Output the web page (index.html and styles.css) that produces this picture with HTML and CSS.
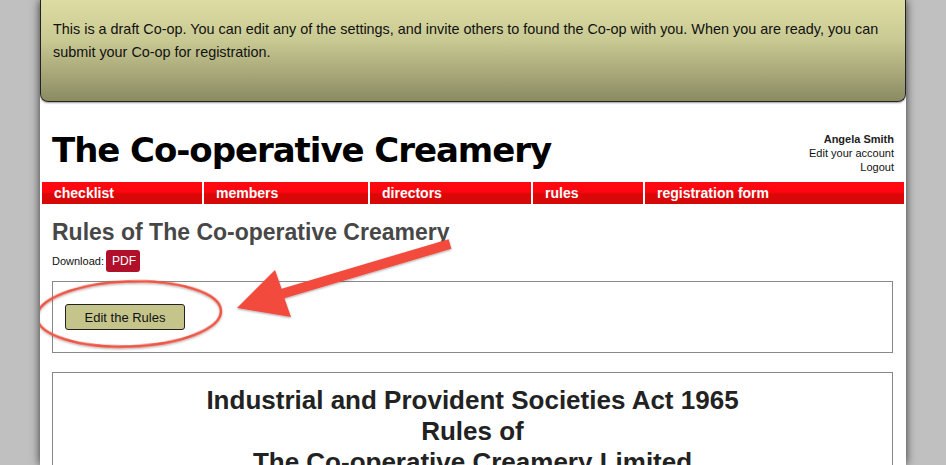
FILE: index.html
```html
<!DOCTYPE html>
<html lang="en">
<head>
<meta charset="utf-8">
<title>Rules of The Co-operative Creamery</title>
<link rel="stylesheet" href="styles.css">
</head>
<body>
<div class="page">
  <div class="banner">
    <p>This is a draft Co-op. You can edit any of the settings, and invite others to found the Co-op with you. When you are ready, you can submit your Co-op for registration.</p>
  </div>
  <div class="header">
    <h1 class="title">The Co-operative Creamery</h1>
    <div class="user">
      <strong>Angela Smith</strong>
      <a href="#">Edit your account</a>
      <a href="#">Logout</a>
    </div>
  </div>
  <nav class="nav">
    <a href="#">checklist</a>
    <a href="#">members</a>
    <a href="#">directors</a>
    <a href="#">rules</a>
    <a href="#">registration form</a>
  </nav>
  <div class="content">
    <h2 class="heading">Rules of The Co-operative Creamery</h2>
    <div class="download">Download: <a class="pdf" href="#">PDF</a></div>
    <div class="box edit-box">
      <button class="edit-btn">Edit the Rules</button>
    </div>
    <div class="box rules-doc">
      <p>Industrial and Provident Societies Act 1965</p>
      <p>Rules of</p>
      <p>The Co-operative Creamery Limited</p>
    </div>
  </div>
  <svg class="annot" width="946" height="465" viewBox="0 0 946 465">
    <defs>
      <filter id="sh" x="-20%" y="-20%" width="140%" height="140%">
        <feDropShadow dx="0" dy="1" stdDeviation="1.2" flood-color="#000" flood-opacity="0.35"/>
      </filter>
    </defs>
    <ellipse cx="129" cy="314" rx="92" ry="32.5" fill="none" stroke="#ee5443" stroke-width="2.5" transform="rotate(-2 129 314)" filter="url(#sh)"/>
    <polygon points="237,308 275,270 281.6,288.7 448.6,239.2 451.4,248.8 284.4,298.3 291,317" fill="#f24c3d" filter="url(#sh)"/>
  </svg>
</div>
</body>
</html>
```
FILE: styles.css
```css
* { box-sizing: border-box; }
html, body { margin: 0; padding: 0; }
body {
  background: #c0c0c0;
  font-family: "Liberation Sans", Arial, sans-serif;
  color: #111;
  height: 465px;
  overflow: hidden;
}
.page {
  position: relative;
  width: 866px;
  margin-left: 40px;
  height: 465px;
  overflow: hidden;
  background: #fff;
  box-shadow: 0 0 9px rgba(0,0,0,0.75);
}
.banner {
  height: 102px;
  background: linear-gradient(#dcdca2 0%, #c9c993 40%, #8b8b63 100%);
  border: 1px solid #222;
  border-top: none;
  border-radius: 0 0 8px 8px;
  padding: 18px 12px 0 12px;
  box-shadow: 0 1px 2px rgba(0,0,0,0.4);
}
.banner p {
  margin: 0;
  font-size: 14.4px;
  line-height: 23px;
  color: #111;
}
.header {
  display: flex;
  justify-content: space-between;
  align-items: flex-start;
  padding: 28px 12px 0 12px;
  height: 80px;
}
.title {
  margin: 0;
  font-family: "DejaVu Sans", Verdana, sans-serif;
  font-weight: bold;
  font-size: 34px;
  line-height: 40px;
  color: #000;
  letter-spacing: -1.05px;
}
.user {
  display: flex;
  flex-direction: column;
  align-items: flex-end;
  font-size: 11px;
  line-height: 14px;
  margin-top: 2px;
}
.user strong { color: #222; }
.user a { color: #111; text-decoration: none; }
.nav {
  display: grid;
  grid-template-columns: 160px 164px 161px 110px 1fr;
  column-gap: 2px;
  margin: 0 2px;
  height: 22px;
}
.nav a {
  display: block;
  background: linear-gradient(#ff0a10 0%, #ff0510 45%, #dc0808 55%, #d60707 100%);
  color: #fff;
  font-weight: bold;
  font-size: 14px;
  line-height: 22px;
  padding-left: 12px;
  text-decoration: none;
}
.content {
  padding: 0 12px;
}
.heading {
  margin: 14px 0 0 0;
  font-size: 23px;
  line-height: 28px;
  color: #474747;
  font-weight: bold;
}
.download {
  display: flex;
  align-items: center;
  gap: 2px;
  font-size: 11px;
  margin-top: 4px;
  height: 22px;
}
.pdf {
  display: inline-block;
  background: #b0102a;
  color: #fff;
  text-decoration: none;
  font-size: 12px;
  line-height: 22px;
  padding: 0 6px;
  border-radius: 3px;
  width: 34px;
  text-align: center;
}
.box {
  border: 1px solid #888;
  margin-right: 1px;
}
.edit-box {
  margin-top: 9px;
  height: 72px;
  padding: 22px 0 0 12px;
}
.edit-btn {
  width: 120px;
  height: 26px;
  background: #c5c58b;
  border: 1px solid #222;
  border-radius: 3px;
  font-family: "Liberation Sans", Arial, sans-serif;
  font-size: 13px;
  color: #111;
  padding: 0;
}
.rules-doc {
  margin-top: 19px;
  height: 120px;
  padding-top: 12px;
  text-align: center;
}
.rules-doc p {
  margin: 0;
  font-size: 26px;
  line-height: 31px;
  font-weight: bold;
  color: #222;
}
.annot {
  position: absolute;
  left: -40px;
  top: 0;
  pointer-events: none;
}
```
